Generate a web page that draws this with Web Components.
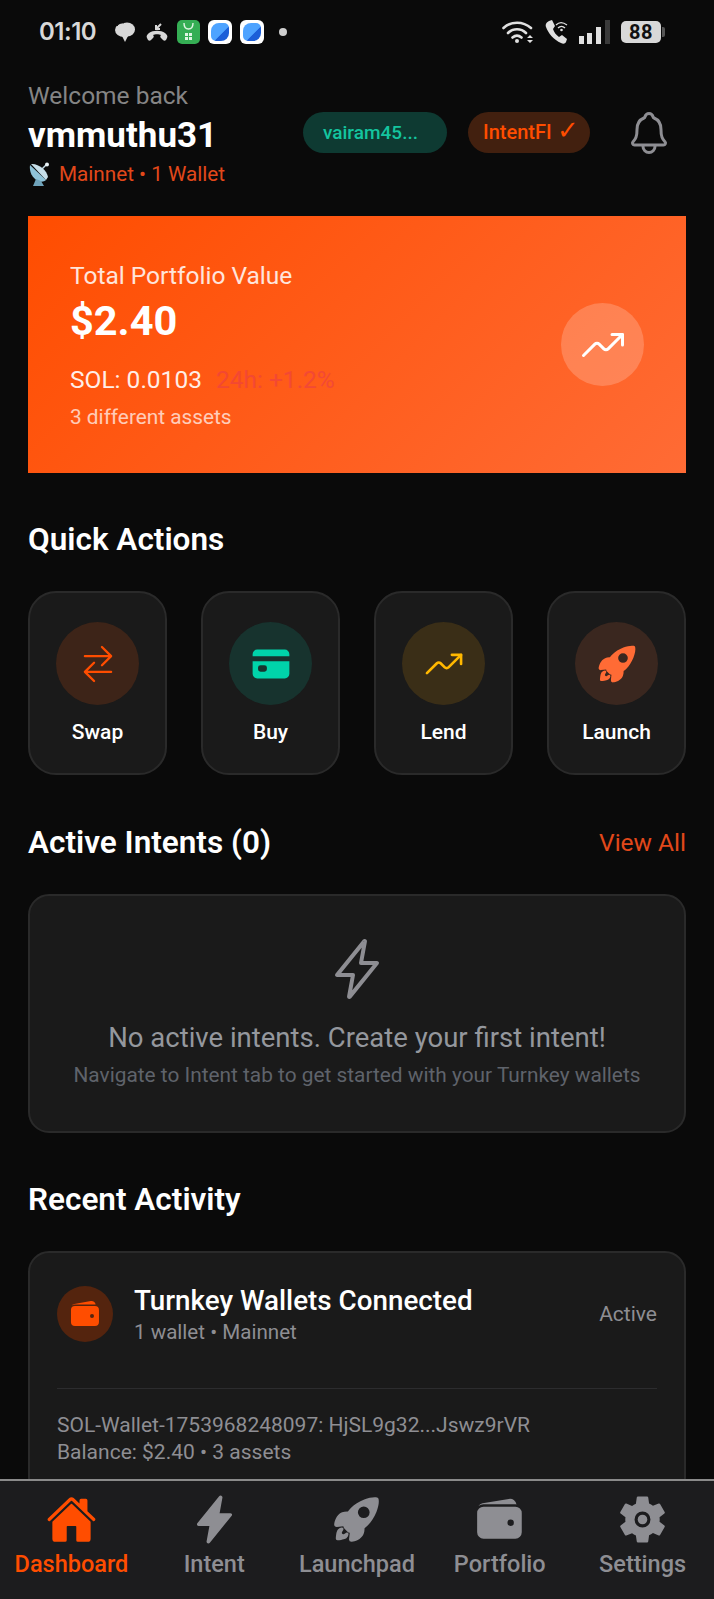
<!DOCTYPE html>
<html>
<head>
<meta charset="utf-8">
<title>Dashboard</title>
<style>
  html, body { margin: 0; height: 100%; background: #0a0a0a; }
  body { font-family: Roboto, "Liberation Sans", sans-serif; color: #fff; overflow: hidden; }
</style>
</head>
<body>
<app-shell>
  <status-bar></status-bar>
  <app-header></app-header>
  <hero-card></hero-card>
  <section-title label="Quick Actions"></section-title>
  <action-grid>
    <action-card label="Swap" icon="swap" color="#ff4d00" tint="#3d2418"></action-card>
    <action-card label="Buy" icon="card" color="#00d4aa" tint="#17332e"></action-card>
    <action-card label="Lend" icon="trend" color="#ffb800" tint="#3a2e17"></action-card>
    <action-card label="Launch" icon="rocket" color="#ff6b35" tint="#3a271f"></action-card>
  </action-grid>
  <section-title label="Active Intents (0)" link="View All"></section-title>
  <empty-card></empty-card>
  <section-title label="Recent Activity"></section-title>
  <activity-card></activity-card>
</app-shell>

<script>
const ICONS = {
  swap: { stroke: 28, d: ['M304 48l112 112-112 112M398.87 160H96M208 464L96 352l112-112M114 352h302'] },
  trend: { stroke: 32, d: ['M352 144h112v112', 'M48 368l121.37-121.37a32 32 0 0145.26 0l50.74 50.74a32 32 0 0045.26 0L464 144'] },
  bell: { stroke: 32, d: ['M427.68 351.43C402 320 383.87 304 383.87 217.35 383.87 138 343.35 109.73 310 96c-4.43-1.82-8.6-6-9.95-10.55C294.2 65.54 277.8 48 256 48s-38.21 17.55-44 37.47c-1.35 4.6-5.52 8.71-9.95 10.53-33.39 13.75-73.87 41.92-73.87 121.35C128.13 304 110 320 84.32 351.43 73.68 364.45 83 384 101.61 384h308.88c18.51 0 27.77-19.61 17.19-32.57zM320 384v16a64 64 0 01-128 0v-16'] },
  flashOutline: { stroke: 32, d: ['M315.27 33L96 304h128l-31.51 173.23a2.36 2.36 0 002.33 2.77h0a2.36 2.36 0 001.89-.95L416 208H288l31.66-173.25a2.45 2.45 0 00-2.46-2.75h0a2.42 2.42 0 00-1.93 1z'] },
  card: { d: ['M32 376a56 56 0 0056 56h336a56 56 0 0056-56V222H32zm66-76a30 30 0 0130-30h48a30 30 0 0130 30v20a30 30 0 01-30 30h-48a30 30 0 01-30-30zM424 80H88a56 56 0 00-56 56v26h448v-26a56 56 0 00-56-56z'] },
  rocket: { d: ['M477.44 50.06a.29.29 0 010-.05 20.4 20.4 0 00-15.13-15.3c-29.8-7.27-76.68.48-128.63 21.28-52.36 21-101.42 52-134.58 85.22A320.7 320.7 0 00169.55 175c-22.33-1-42 2.18-58.57 9.41-57.74 25.41-74.23 90.44-78.62 117.14a25 25 0 0027.19 29h.13l64.32-7.02c.08.82.17 1.57.24 2.26a34.36 34.36 0 009.9 20.72l31.39 31.41a34.27 34.27 0 0020.71 9.91l2.15.23-7 64.24v.13A25 25 0 00206 480a25.25 25.25 0 004.15-.34C237 475.34 302 459.05 327.34 401c7.17-16.46 10.34-36.05 9.45-58.34a314.78 314.78 0 0033.95-29.55c33.43-33.26 64.53-81.92 85.31-133.52 20.69-51.36 28.48-98.59 21.39-129.53zM370.38 224.94a58.77 58.77 0 110-83.07 58.3 58.3 0 010 83.07z', 'M161.93 386.44a16 16 0 00-11 2.67c-6.39 4.37-12.81 8.69-19.29 12.9-13.11 8.52-28.79-6.44-21-20l12.15-21a16 16 0 00-15.16-24.91A61.25 61.25 0 0072 353.56c-3.66 3.67-14.79 14.81-20.78 57.26A357.94 357.94 0 0048 447.59 16 16 0 0064 464h.4a359.87 359.87 0 0036.8-3.2c42.47-6 53.61-17.14 57.27-20.8a60.49 60.49 0 0017.39-35.74 16 16 0 00-13.93-17.82z'] },
  home: { d: ['M261.56 101.28a8 8 0 00-11.06 0L66.4 277.15a8 8 0 00-2.47 5.79L63.9 448a32 32 0 0032 32H192a16 16 0 0016-16V328a8 8 0 018-8h80a8 8 0 018 8v136a16 16 0 0016 16h96.06a32 32 0 0032-32V282.94a8 8 0 00-2.47-5.79z', 'M490.91 244.15l-74.8-71.56V64a16 16 0 00-16-16h-48a16 16 0 00-16 16v32l-57.92-55.38C272.77 35.14 264.71 32 256 32c-8.68 0-16.72 3.14-22.14 8.63l-212.7 203.5c-6.22 6-7 15.87-1.34 22.37A16 16 0 0043 267.56L250.5 69.28a8 8 0 0111.06 0l207.52 198.28a16 16 0 0022.59-.44c6.14-6.36 5.63-16.86-.76-22.97z'] },
  flash: { d: ['M194.82 496a18.36 18.36 0 01-18.1-21.53v-.11L204.83 320H96a16 16 0 01-12.44-26.06L302.73 23a18.45 18.45 0 0132.8 14.76c0 .15-.07.3-.09.45L307.19 192H416a16 16 0 0112.44 26.06L209.24 489a18.45 18.45 0 01-14.42 7z'] },
  wallet: { d: ['M95.5 104h320a87.73 87.73 0 0111.18.71 66 66 0 00-77.51-55.56L86 94.08h-.3a66 66 0 00-41.07 26.13A87.57 87.57 0 0195.5 104z', 'M415.5 128h-320a64.07 64.07 0 00-64 64v192a64.07 64.07 0 0064 64h320a64.07 64.07 0 0064-64V192a64.07 64.07 0 00-64-64zM368 320a32 32 0 1132-32 32 32 0 01-32 32z'] },
  settings: { d: ['M256 176a80 80 0 1080 80 80.24 80.24 0 00-80-80zm172.72 80a165.53 165.53 0 01-1.64 22.34l48.69 38.12a11.59 11.59 0 012.63 14.78l-46.06 79.52a11.64 11.64 0 01-14.14 4.93l-57.25-23a176.56 176.56 0 01-38.82 22.67l-8.56 60.78a11.93 11.93 0 01-11.51 9.86h-92.12a12 12 0 01-11.51-9.53l-8.56-60.78A169.3 169.3 0 01151.05 393L93.8 416a11.64 11.64 0 01-14.14-4.92L33.6 331.57a11.59 11.59 0 012.63-14.78l48.69-38.12A174.58 174.58 0 0183.28 256a165.53 165.53 0 011.64-22.34l-48.69-38.12a11.59 11.59 0 01-2.63-14.78l46.06-79.52a11.64 11.64 0 0114.14-4.93l57.25 23a176.56 176.56 0 0138.82-22.67l8.56-60.78A11.93 11.93 0 01209.94 26h92.12a12 12 0 0111.51 9.53l8.56 60.78A169.3 169.3 0 01361 119l57.2-23a11.64 11.64 0 0114.14 4.92l46.06 79.52a11.59 11.59 0 01-2.63 14.78l-48.69 38.12a174.58 174.58 0 011.64 22.66z', 'M256 208a48 48 0 100 96 48 48 0 000-96z'] },
};

function iconSvg(name, size, color) {
  let icon = ICONS[name];
  let paint = icon.stroke
    ? `fill="none" stroke="${color}" stroke-width="${icon.stroke}" stroke-linecap="round" stroke-linejoin="round"`
    : `fill="${color}" fill-rule="evenodd"`;
  let paths = icon.d.map((d) => `<path d="${d}"/>`).join('');
  return `<svg width="${size}" height="${size}" viewBox="0 0 512 512" ${paint} style="display:block;flex:none">${paths}</svg>`;
}

class BaseElement extends HTMLElement {
  constructor() {
    super();
    this.attachShadow({ mode: 'open' });
  }
  connectedCallback() {
    this.shadowRoot.innerHTML = this.markup();
  }
}

class AppShell extends BaseElement {
  markup() {
    return `
      <style>
        :host { display: flex; flex-direction: column; height: 1599px; background: #0a0a0a; overflow: hidden; }
        .content { flex: 1; min-height: 0; overflow: hidden; }
      </style>
      <div class="content"><slot></slot></div>
      <tab-bar></tab-bar>`;
  }
}

class StatusBar extends BaseElement {
  markup() {
    return `
      <style>
        :host { display: flex; align-items: center; height: 62px; padding: 2px 49px 0 39px; box-sizing: border-box; color: #d8d8d8; }
        .time { font: 600 24px/30px Inter, Roboto, sans-serif; letter-spacing: -0.5px; width: 59px; margin-right: 17px; white-space: nowrap; }
        svg { display: block; flex: none; }
        .left, .right { display: flex; align-items: center; }
        .right { margin-left: auto; }
        .bat { width: 40px; height: 22px; border-radius: 5px; background: #d8d8d8; color: #111; font: 700 20px/22px Roboto, sans-serif; text-align: center; letter-spacing: 0.5px; }
        .tip { width: 3px; height: 10px; border-radius: 0 2px 2px 0; background: #555; margin-left: 1px; }
      </style>
      <div class="left">
        <span class="time">01:10</span>
        <svg width="20" height="20" viewBox="0 0 20 20" style="margin-right:11px"><ellipse cx="9" cy="8" rx="9" ry="7" fill="#d8d8d8"/><ellipse cx="12" cy="7.500" rx="8" ry="7" fill="#d8d8d8"/><path fill="#d8d8d8" d="M6 12h8l-4 8z"/><path fill="none" stroke="#0a0a0a" stroke-width="1" d="M2 4c2-3 5-3.500 7-3"/></svg>
        <svg width="22" height="19" viewBox="0 0 22 19" style="margin-right:9px"><path fill="#d8d8d8" d="M1 15c-1-2 0-3 2-5 4-3 12-3 16 0 2 2 3 3 2 5l-1 2c-1 1-2 1-3 0l-2-2c-1-1-1-2 0-3-2-1-6-1-8 0 1 1 1 2 0 3l-2 2c-1 1-2 1-3 0z"/><path fill="none" stroke="#d8d8d8" stroke-width="2" d="M15 1l-5 5M10 2v4h4"/></svg>
        <svg width="23" height="24" viewBox="0 0 23 24" style="margin-right:8px"><rect width="23" height="24" rx="5" fill="#35ae54"/><path d="M7 3c0 4 2 6 4.500 6S16 7 16 3" fill="none" stroke="#dff5e3" stroke-width="1.400"/><path fill="#dff5e3" d="M8 13h3v3H8zM12 13h3v3h-3zM8 17h3v3H8zM12 17h3v3h-3z"/></svg>
        <app-tile style="margin-right:8px"></app-tile>
        <app-tile style="margin-right:15px"></app-tile>
        <svg width="8" height="8" viewBox="0 0 8 8"><circle cx="4" cy="4" r="4" fill="#cfcfcf"/></svg>
      </div>
      <div class="right">
        <svg width="33" height="24" viewBox="0 0 33 24" style="margin-right:10px" fill="none" stroke="#e0e0e0" stroke-width="2.600" stroke-linecap="round"><path d="M1.500 8C9 1 21 1 29 8M6 13c5-5 13-5 18 0M10.500 17.500c3-2.500 6-2.500 9 0"/><circle cx="15" cy="21" r="2" fill="#e0e0e0" stroke="none"/><path d="M28 15l3 3h-6zM28 23l-3-3h6z" fill="#e0e0e0" stroke="none"/></svg>
        <svg width="23" height="24" viewBox="0 0 23 24" style="margin-right:11px"><path fill="#e0e0e0" d="M4 1l3-1 3 6-2 3c1 3 3 6 6 8l3-2 5 4-1 3c-1 2-3 2-5 1C9 20 3 13 1 7 0 4 2 2 4 1z"/><path fill="none" stroke="#e0e0e0" stroke-width="1.300" d="M11 5c3-3 7-3 11 0M13 8c2-2 5-2 7 0"/><circle cx="16.500" cy="10" r="1.300" fill="#e0e0e0"/></svg>
        <svg width="32" height="24" viewBox="0 0 32 24" style="margin-right:10px"><rect x="0" y="16" width="5" height="8" fill="#e0e0e0"/><rect x="8" y="13" width="5" height="11" fill="#e0e0e0"/><rect x="17" y="7" width="5" height="17" fill="#e0e0e0"/><rect x="26" y="0" width="5" height="24" fill="#3a3a3a"/></svg>
        <div class="bat">88</div><div class="tip"></div>
      </div>`;
  }
}

class AppTile extends BaseElement {
  markup() {
    return `
      <style>
        :host { display: block; width: 24px; height: 24px; border-radius: 6px; background: #fff; position: relative; flex: none; }
        .core { position: absolute; inset: 3px; border-radius: 8px 5px 8px 5px; background: linear-gradient(135deg, #4ea3ff 58%, #1c5fd8 60%); }
      </style>
      <div class="core"></div>`;
  }
}

class ChipPill extends BaseElement {
  markup() {
    return `
      <style>
        :host { display: block; flex: none; height: 41px; border-radius: 21px; padding-left: ${this.getAttribute('pad')}px; box-sizing: border-box; font: 500 ${this.getAttribute('size')}px/41px Roboto, sans-serif; white-space: nowrap; color: ${this.getAttribute('color')}; background: ${this.getAttribute('bg')}; width: ${this.getAttribute('w')}px; }
      </style>
      <slot></slot>`;
  }
}

class AppHeader extends BaseElement {
  markup() {
    return `
      <style>
        :host { display: flex; align-items: center; padding: 17px 47px 27px 28px; height: 154px; box-sizing: border-box; }
        .who { flex: 1; min-width: 0; }
        .welcome { font-size: 24.500px; line-height: 34px; color: #858585; }
        .name { font-size: 35px; line-height: 42px; font-weight: 700; color: #fff; margin-top: 2px; }
        .net { display: flex; align-items: center; font-size: 20.700px; line-height: 30px; color: #e2481a; margin-top: 2px; }
        .net svg { margin-right: 6px; }
        .chips { display: flex; align-items: center; gap: 21px; margin-top: -4px; }
        .bell { margin-left: 35px; margin-top: -3px; margin-right: -6px; }
        .tick { font-size: 26px; line-height: 0; }
      </style>
      <div class="who">
        <div class="welcome">Welcome back</div>
        <div class="name">vmmuthu31</div>
        <div class="net">
          <svg width="25" height="26" viewBox="0 0 25 26"><path fill="#8fc3d8" d="M2 4c-1 6 2 13 8 16 3 1 6 1 8-1z"/><path fill="#c7dfe9" d="M3 3l15 16 2-3C19 9 10 2 3 3z"/><path fill="#6fa3ba" d="M8 18l-3 7h11l-3-5z"/><path stroke="#c7dfe9" stroke-width="1.500" d="M11 11l7-7"/><circle cx="19" cy="3.500" r="2" fill="#e8f2f6"/></svg>
          <span>Mainnet • 1 Wallet</span>
        </div>
      </div>
      <div class="chips">
        <chip-pill color="#14c49f" bg="#0e3a32" w="144" size="19" pad="20">vairam45...</chip-pill>
        <chip-pill color="#ff4d00" bg="#42200f" w="122" size="20" pad="15">IntentFI <span class="tick">✓</span></chip-pill>
      </div>
      <div class="bell">${iconSvg('bell', 48, '#8e8e93')}</div>`;
  }
}

class HeroCard extends BaseElement {
  markup() {
    return `
      <style>
        :host { display: flex; align-items: center; justify-content: space-between; height: 257px; margin: 0 28px; padding: 0 42px; box-sizing: border-box; background: linear-gradient(135deg, #ff4d00, #ff6b35); color: #fff; }
        .block { margin-top: 2px; }
        .label { font-size: 24.500px; line-height: 33px; opacity: .85; }
        .value { font-size: 41.500px; line-height: 56px; font-weight: 700; margin-top: 1px; }
        .sol { display: flex; font-size: 24.500px; line-height: 34px; margin-top: 14px; }
        .sol span:first-child { opacity: .9; }
        .delta { color: #e8384f; margin-left: 14px; opacity: .5; }
        .assets { font-size: 20.800px; line-height: 30px; margin-top: 5px; opacity: .7; }
        .circle { width: 83px; height: 83px; border-radius: 50%; background: rgba(255,255,255,.2); display: flex; align-items: center; justify-content: center; }
      </style>
      <div class="block">
        <div class="label">Total Portfolio Value</div>
        <div class="value">$2.40</div>
        <div class="sol"><span>SOL: 0.0103</span><span class="delta">24h: +1.2%</span></div>
        <div class="assets">3 different assets</div>
      </div>
      <div class="circle">${iconSvg('trend', 48, '#fff')}</div>`;
  }
}

class SectionTitle extends BaseElement {
  markup() {
    let link = this.getAttribute('link');
    return `
      <style>
        :host { display: flex; align-items: center; justify-content: space-between; height: 40px; margin: 47px 28px 31px; }
        h2 { margin: 0; font-size: 31.500px; font-weight: 600; line-height: 40px; color: #fff; }
        a { font-size: 24.500px; line-height: 40px; color: #e2481a; }
      </style>
      <h2>${this.getAttribute('label')}</h2>
      ${link ? `<a>${link}</a>` : ''}`;
  }
}

class ActionGrid extends BaseElement {
  markup() {
    return `
      <style>
        :host { display: grid; grid-template-columns: repeat(4, 139px); justify-content: space-between; margin: 0 28px; padding-bottom: 1px; }
      </style>
      <slot></slot>`;
  }
}

class ActionCard extends BaseElement {
  markup() {
    return `
      <style>
        :host { display: flex; flex-direction: column; align-items: center; height: 184px; padding-top: 29px; box-sizing: border-box; background: #1a1a1a; border: 2px solid #2a2a2a; border-radius: 28px; }
        .circle { width: 83px; height: 83px; border-radius: 50%; display: flex; align-items: center; justify-content: center; background: ${this.getAttribute('tint')}; }
        .label { font-size: 21px; font-weight: 500; line-height: 28px; margin-top: 13px; color: #fff; }
      </style>
      <div class="circle">${iconSvg(this.getAttribute('icon'), 42, this.getAttribute('color'))}</div>
      <div class="label">${this.getAttribute('label')}</div>`;
  }
}

class EmptyCard extends BaseElement {
  markup() {
    return `
      <style>
        :host { display: flex; flex-direction: column; align-items: center; height: 239px; margin: 0 28px; padding-top: 41px; box-sizing: border-box; background: #1a1a1a; border: 2px solid #2a2a2a; border-radius: 21px; }
        .title { font-size: 27.500px; line-height: 36px; margin-top: 19px; color: #94979d; }
        .hint { font-size: 20.850px; line-height: 28px; margin-top: 5px; color: #5f636b; }
      </style>
      ${iconSvg('flashOutline', 64, '#8e8e93')}
      <div class="title">No active intents. Create your first intent!</div>
      <div class="hint">Navigate to Intent tab to get started with your Turnkey wallets</div>`;
  }
}

class ActivityCard extends BaseElement {
  markup() {
    return `
      <style>
        :host { display: block; margin: 0 28px; padding: 30px 27px 30px; background: #1a1a1a; border: 2px solid #2a2a2a; border-radius: 21px; }
        .row { display: flex; align-items: center; height: 62px; padding-bottom: 43px; border-bottom: 1px solid #2c2c2e; box-sizing: content-box; }
        .badge { width: 56px; height: 56px; border-radius: 50%; background: #54240e; display: flex; align-items: center; justify-content: center; flex: none; }
        .text { flex: 1; margin-left: 21px; }
        .title { font-size: 27.800px; font-weight: 500; line-height: 36px; color: #fff; }
        .sub { font-size: 20.600px; line-height: 26px; color: #8e8e93; }
        .state { font-size: 21px; color: #8e8e93; }
        .detail { font-size: 21px; line-height: 27px; color: #8e8e93; margin-top: 23px; }
      </style>
      <div class="row">
        <div class="badge">${iconSvg('wallet', 32, '#ff4d00')}</div>
        <div class="text">
          <div class="title">Turnkey Wallets Connected</div>
          <div class="sub">1 wallet • Mainnet</div>
        </div>
        <div class="state">Active</div>
      </div>
      <div class="detail">SOL-Wallet-1753968248097: HjSL9g32...Jswz9rVR<br>Balance: $2.40 • 3 assets</div>`;
  }
}

class TabBar extends BaseElement {
  markup() {
    return `
      <style>
        :host { display: grid; grid-template-columns: repeat(5, 1fr); flex: none; height: 120px; box-sizing: border-box; padding-top: 13px; background: #1c1c1e; border-top: 2px solid #8a8a8a; }
      </style>
      <tab-item label="Dashboard" icon="home" active></tab-item>
      <tab-item label="Intent" icon="flash"></tab-item>
      <tab-item label="Launchpad" icon="rocket"></tab-item>
      <tab-item label="Portfolio" icon="wallet"></tab-item>
      <tab-item label="Settings" icon="settings"></tab-item>`;
  }
}

class TabItem extends BaseElement {
  markup() {
    let color = this.hasAttribute('active') ? '#ff4d00' : '#8e8e93';
    return `
      <style>
        :host { display: flex; flex-direction: column; align-items: center; color: ${color}; }
        .label { font-size: 23.500px; font-weight: 500; line-height: 28px; margin-top: 5px; white-space: nowrap; }
      </style>
      ${iconSvg(this.getAttribute('icon'), 51, color)}
      <div class="label">${this.getAttribute('label')}</div>`;
  }
}

customElements.define('app-tile', AppTile);
customElements.define('status-bar', StatusBar);
customElements.define('chip-pill', ChipPill);
customElements.define('app-header', AppHeader);
customElements.define('hero-card', HeroCard);
customElements.define('section-title', SectionTitle);
customElements.define('action-grid', ActionGrid);
customElements.define('action-card', ActionCard);
customElements.define('empty-card', EmptyCard);
customElements.define('activity-card', ActivityCard);
customElements.define('tab-item', TabItem);
customElements.define('tab-bar', TabBar);
customElements.define('app-shell', AppShell);
</script>
</body>
</html>
